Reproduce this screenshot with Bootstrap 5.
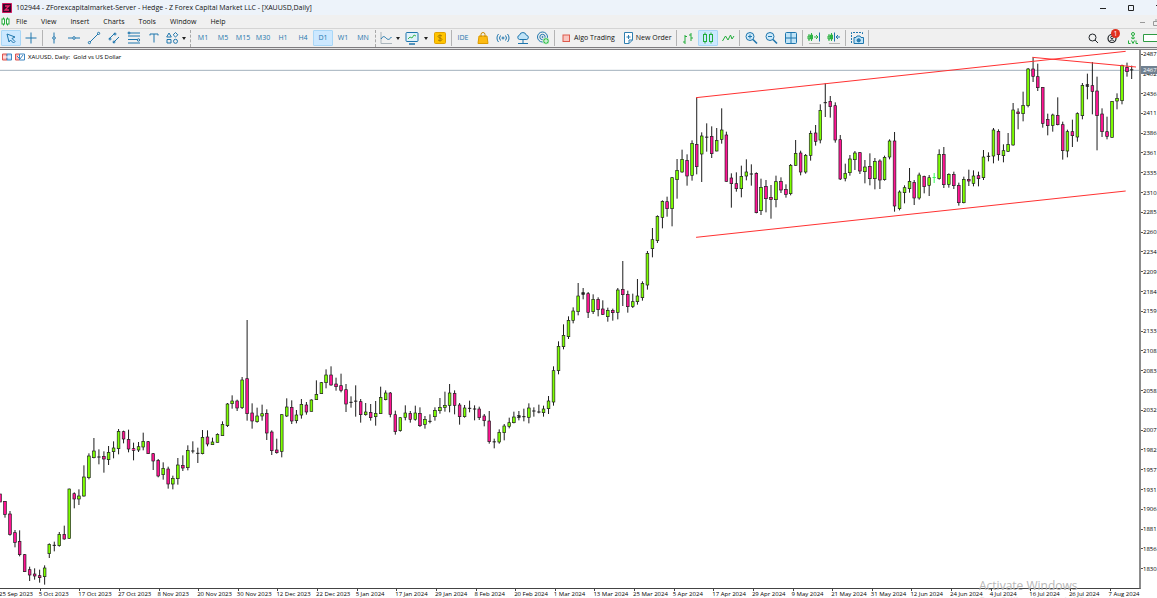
<!DOCTYPE html>
<html lang="en">
<head>
<meta charset="utf-8">
<meta name="viewport" content="width=device-width, initial-scale=1">
<title>102944 - ZForexcapitalmarket-Server</title>
<link rel="stylesheet" href="https://cdn.jsdelivr.net/npm/bootstrap@5.3.0/dist/css/bootstrap.min.css">
<style>
  body { font-family: "Open Sans", "Noto Sans", sans-serif; font-size: 7px; line-height: 12px; color: #111; background: #fff; }
  button { font: inherit; color: inherit; border: 0; background: none; padding: 0; white-space: nowrap; }
  svg { display: block; }
  .titlebar { height: 15px; background: #edf3fa; padding-left: 2px; }
  .titlebar h1 { font-size: 7px; line-height: 12px; font-weight: 400; }
  .applogo { width: 10px; height: 10px; }
  .menubar { height: 13px; background: #f0f0f0; padding-left: 1px; }
  .menubar .menus { gap: 14px; margin-left: 6px; }
  .toolbar { height: 19px; background: #f0f0f0; border-top: 1px solid #d4d4d4; padding-left: 1px; color: #1f76ad; }
  .tool { width: 20px; height: 16px; display: flex; align-items: center; justify-content: center; flex: none; border: 1px solid transparent; border-radius: 1px; }
  .tool.wide { width: 16px; }
  .tool svg, .cmd svg { width: 14px; height: 14px; fill: none; stroke: currentColor; stroke-width: 1; flex: none; }
  .tool.on { background: #cce8ff; border-color: #a9d7f7; }
  .caret { width: 8px; display: flex; justify-content: center; }
  .caret::before { content: ""; border: 2px solid transparent; border-top: 3px solid #222; border-bottom: 0; }
  .rule { width: 1px; height: 16px; background: #b4b4b4; margin: 0 1px; flex: none; }
  .grip { width: 1px; height: 17px; border-left: 1px dashed #a8a8a8; margin: 0 2px; flex: none; }
  .cmd { display: flex; align-items: center; gap: 1px; color: #111; flex: none; margin: 0 3px; }
  .green { color: #22ad3b; }
  .frame { height: 3px; border-top: 1px solid #7f7d80; border-bottom: 1px solid #7f7d80; background: #e4e4e4; }
  .plot { border-right: 2px solid #8c8c8c; border-bottom: 1px solid #444; }
  .plot svg { width: 100%; height: 100%; }
  .caption { left: 2px; top: 2px; gap: 3px; font-size: 6px; line-height: 10px; color: #000; }
  .caption svg { width: 10px; height: 8px; }
  .prices { width: 16px; padding-bottom: 16px; font-size: 6px; line-height: 8px; color: #000; }
  .prices span { display: flex; align-items: center; }
  .prices span::before { content: ""; width: 2px; height: 1px; background: #555; flex: none; }
  .lastprice { left: 0; top: 16px; width: 16px; padding-left: 2px; background: #708090; color: #fff; }
  .dates { height: 9px; font-size: 6px; line-height: 10px; color: #000; }
  .dates span { flex: 0 0 3.425%; margin-left: -1px; margin-right: 1px; white-space: nowrap; position: relative; }
  .dates span + span::before { content: ""; position: absolute; left: 1px; top: 0; width: 1px; height: 2px; background: #444; }
  .watermark { right: 20px; bottom: -17px; width: 140px; color: #b8b8b8; pointer-events: none; white-space: nowrap; }
  .watermark b { display: block; font-weight: 400; font-size: 12px; line-height: 15px; }
  .watermark small { display: block; font-size: 8px; line-height: 12px; color: #dcdcdc; }
  .alertdot { left: 7px; top: -2px; width: 9px; height: 9px; border-radius: 50%; background: #e0301e; color: #fff; line-height: 9px; text-align: center; }
</style>
</head>
<body class="d-flex flex-column vh-100 overflow-hidden">

<svg width="0" height="0" class="position-absolute" aria-hidden="true">
  <symbol id="i-cursor" viewBox="0 0 14 14"><path d="M3 3l8 3-3 1.500 3 3-1.500 1.500-3-3L5 11z"/></symbol>
  <symbol id="i-cross" viewBox="0 0 14 14"><path d="M7 1.500v11M1.500 7h11"/></symbol>
  <symbol id="i-vline" viewBox="0 0 14 14"><path d="M7 1.500v4M7 8.500v4"/><circle cx="7" cy="7" r="1.300"/></symbol>
  <symbol id="i-hline" viewBox="0 0 14 14"><path d="M1 7h4.500M8.500 7h4.500"/><circle cx="7" cy="7" r="1.300"/></symbol>
  <symbol id="i-trend" viewBox="0 0 14 14"><path d="M3 11l8-8"/><circle cx="2.400" cy="11.600" r="1.100"/><circle cx="11.600" cy="2.400" r="1.100"/></symbol>
  <symbol id="i-channel" viewBox="0 0 14 14"><path d="M2 8l6-6M6 12l6-6"/><circle cx="3" cy="8" r="1"/><circle cx="8" cy="3" r="1"/><circle cx="7" cy="11" r="1"/></symbol>
  <symbol id="i-fibo" viewBox="0 0 14 14"><path d="M1 2h12M1 5h12M1 8.500h9M1 12h12"/><circle cx="11.500" cy="9" r="1.200"/><circle cx="2" cy="2" r="1"/></symbol>
  <symbol id="i-text" viewBox="0 0 14 14"><path d="M3 4.500V3h8v1.500M7 3v8.500"/></symbol>
  <symbol id="i-shapes" viewBox="0 0 14 14"><path d="M4 2L1.700 6h4.600zM2 8.500h4V12H2z"/><path d="M10.500 1.500l2.300 2.300-2.300 2.300-2.300-2.300z"/><circle cx="10.500" cy="10.300" r="2"/></symbol>
  <symbol id="i-line" viewBox="0 0 14 14"><path d="M2 1v11.500h11" stroke="#aab4bb"/><path d="M2 8c2-3 3-3 5-1s3 2 5.500-1"/></symbol>
  <symbol id="i-monitor" viewBox="0 0 14 14"><rect x="1" y="1.500" width="12" height="9" rx="1" fill="#dff1fb"/><path d="M4 13h6" stroke-width="1.500"/><path d="M3 8l2-2 2 1 2-3 2 1" stroke="#3fb950"/></symbol>
  <symbol id="i-dollar" viewBox="0 0 14 14"><rect x="1.500" y="1.500" width="11" height="11" rx="1" fill="#ffc400" stroke="#e0a100"/><path d="M9 5C8 4 5 4 5 5.500S9 7 9 8.500 6 10 5 9M7 3.500v7" stroke="#a87c00"/></symbol>
  <symbol id="i-bag" viewBox="0 0 14 14"><path d="M3 5h8l1 7.500H2z" fill="#fdbb12" stroke="#dd9c00"/><path d="M5 6V3.500a2 2 0 014 0V6" stroke="#c98b00"/></symbol>
  <symbol id="i-signal" viewBox="0 0 14 14"><circle cx="7" cy="7" r="1"/><path d="M4.500 4.500a4 4 0 000 5M9.500 4.500a4 4 0 010 5M2.500 3a6 6 0 000 8M11.500 3a6 6 0 010 8"/></symbol>
  <symbol id="i-cloud" viewBox="0 0 14 14"><path d="M3.500 8.500a2.200 2.200 0 010-4.300 3.500 3.500 0 016.800 0 2.200 2.200 0 01.500 4.300z" fill="#bfe3f7"/><path d="M7 8.500V12M2 12.500h10"/></symbol>
  <symbol id="i-target" viewBox="0 0 14 14"><circle cx="6.500" cy="6" r="5"/><circle cx="6.500" cy="6" r="2.700"/><circle cx="6.500" cy="6" r=".6"/><circle cx="10" cy="10" r="3.200" fill="#35bf4c" stroke="#fff" stroke-width=".6"/><path d="M10 8v4M8 10h4" stroke="#fff"/></symbol>
  <symbol id="i-stop" viewBox="0 0 14 14"><rect x="4" y="4" width="6.500" height="6.500" fill="#f9c6c0" stroke="#dd5a4c"/></symbol>
  <symbol id="i-order" viewBox="0 0 14 14"><path d="M3.500 1.500h8V9L8 12.500H3.500z" fill="#fff" stroke="#2f7fb0"/><path d="M7.500 4v4M5.500 6h4M8 12.500V9h3.500" stroke="#2f7fb0"/></symbol>
  <symbol id="i-bars" viewBox="0 0 14 14"><path d="M4 4v9M2 11h2M4 5.500h2M10 2v8M8 4h2M10 7h2"/></symbol>
  <symbol id="i-candles" viewBox="0 0 14 14"><path d="M4 1.500v2M4 10.500v2M10 1.500v2M10 10.500v2"/><rect x="2.500" y="3.500" width="3" height="7"/><rect x="8.500" y="3.500" width="3" height="7"/></symbol>
  <symbol id="i-wave" viewBox="0 0 14 14"><path d="M1.500 10l3-5 2.500 4 2.500-5 1.500 4 2-3"/></symbol>
  <symbol id="i-zoomin" viewBox="0 0 14 14"><circle cx="6" cy="5.500" r="4" fill="#cfeafa"/><path d="M9 8.500l4 4" stroke-width="1.600"/><path d="M6 3.500v4M4 5.500h4"/></symbol>
  <symbol id="i-zoomout" viewBox="0 0 14 14"><circle cx="6" cy="5.500" r="4" fill="#cfeafa"/><path d="M9 8.500l4 4" stroke-width="1.600"/><path d="M4 5.500h4"/></symbol>
  <symbol id="i-tiles" viewBox="0 0 14 14"><rect x="1.500" y="1.500" width="11" height="11" rx="1" fill="#bfe3f7"/><path d="M7 1.500v11M1.500 7h11"/></symbol>
  <symbol id="i-shift" viewBox="0 0 14 14"><path d="M2 3v7M4.500 2v8M3.500 4h2v4h-2zM1 5h2v3H1zM7 6h4M9 4l2 2-2 2" stroke="#2fb344"/><path d="M12.500 1.500v9"/><path d="M2 12.500h11" stroke="#b5b5b5"/></symbol>
  <symbol id="i-scroll" viewBox="0 0 14 14"><path d="M2 3v7M4.500 2v8M3.500 4h2v4h-2zM1 5h2v3H1z" stroke="#2fb344"/><path d="M7.500 1.500v9M9 6h4M11 4L9 6l2 2"/><path d="M2 12.500h11" stroke="#b5b5b5"/></symbol>
  <symbol id="i-camera" viewBox="0 0 14 14"><path d="M1.500 12V1.500h11V4" stroke-dasharray="2 1"/><path d="M4 6.500h2l1-1.500h3l1 1.500h2.500v6H4z" fill="#bfe3f7"/><circle cx="8.700" cy="9.300" r="1.600" fill="#2f7fb0"/></symbol>
  <symbol id="i-search" viewBox="0 0 14 14"><circle cx="6.500" cy="6.500" r="3.500"/><path d="M9 9l3 3"/></symbol>
  <symbol id="i-user" viewBox="0 0 14 14"><circle cx="6" cy="7.500" r="4" stroke-width="1.200"/><circle cx="6" cy="6.500" r="1.300"/><path d="M3.500 10.500c1-2 4-2 5 0"/></symbol>
  <symbol id="i-candlemark" viewBox="0 0 9 9"><path d="M2.500 .5v8M6.500 .5v8"/><rect x="1" y="2" width="2.500" height="5" fill="#fff"/><rect x="5.500" y="2" width="2.500" height="5" fill="#fff"/></symbol>
</svg>

<header class="titlebar d-flex align-items-center gap-1">
  <svg class="applogo" viewBox="0 0 10 10"><path fill="#35062b" stroke="#d3165d" d="M.5.500h9v9h-9z"/><path fill="none" stroke="#f0226a" stroke-width="1.300" d="M3 3h4L3 7h4"/></svg>
  <h1 class="mb-0 text-nowrap">102944 - ZForexcapitalmarket-Server - Hedge - Z Forex Capital Market LLC - [XAUUSD,Daily]</h1>
  <div class="ms-auto d-flex">
    <button class="me-3" aria-label="Minimize"><svg width="12" height="12" stroke="#222"><path d="M3 6.500h6"/></svg></button>
    <button class="me-3" aria-label="Maximize"><svg width="12" height="12" stroke="#222" fill="none"><path d="M3.500 3.500h5v5h-5z"/></svg></button>
    <button aria-label="Close"><svg width="4" height="12" stroke="#222"><path d="M3 3l4 4"/></svg></button>
  </div>
</header>

<nav class="menubar d-flex align-items-center">
  <svg class="green" width="9" height="9" fill="none" stroke="currentColor"><use href="#i-candlemark"/></svg>
  <div class="menus d-flex">
    <button>File</button><button>View</button><button>Insert</button><button>Charts</button><button>Tools</button><button>Window</button><button>Help</button>
  </div>
  <div class="ms-auto d-flex gap-2">
    <button aria-label="Minimize chart"><svg width="5" height="8" stroke="#999"><path d="M0 4.500h5"/></svg></button>
    <button aria-label="Restore chart"><svg width="4" height="8" stroke="#999" fill="none"><path d="M.5 3.500h4v4h-4zM2 2h3"/></svg></button>
  </div>
</nav>

<div class="toolbar d-flex align-items-center" role="toolbar" aria-label="Chart tools">
  <button class="tool on" aria-label="Cursor"><svg><use href="#i-cursor"/></svg></button>
  <button class="tool" aria-label="Crosshair"><svg><use href="#i-cross"/></svg></button>
  <span class="rule"></span>
  <button class="tool" aria-label="Vertical line"><svg><use href="#i-vline"/></svg></button>
  <button class="tool" aria-label="Horizontal line"><svg><use href="#i-hline"/></svg></button>
  <button class="tool" aria-label="Trendline"><svg><use href="#i-trend"/></svg></button>
  <button class="tool" aria-label="Channel"><svg><use href="#i-channel"/></svg></button>
  <button class="tool" aria-label="Fibonacci"><svg><use href="#i-fibo"/></svg></button>
  <button class="tool" aria-label="Text"><svg><use href="#i-text"/></svg></button>
  <button class="tool wide" aria-label="Shapes"><svg><use href="#i-shapes"/></svg></button>
  <button class="caret" aria-label="More shapes"></button>
  <span class="grip"></span>
  <button class="tool">M1</button><button class="tool">M5</button><button class="tool">M15</button><button class="tool">M30</button><button class="tool">H1</button><button class="tool">H4</button><button class="tool on">D1</button><button class="tool">W1</button><button class="tool">MN</button>
  <span class="grip"></span>
  <button class="tool wide" aria-label="Chart type"><svg><use href="#i-line"/></svg></button>
  <button class="caret" aria-label="More chart types"></button>
  <button class="tool" aria-label="Indicators"><svg><use href="#i-monitor"/></svg></button>
  <button class="caret" aria-label="More indicators"></button>
  <button class="tool" aria-label="Trade"><svg><use href="#i-dollar"/></svg></button>
  <span class="rule"></span>
  <button class="tool">IDE</button>
  <button class="tool" aria-label="Market"><svg><use href="#i-bag"/></svg></button>
  <button class="tool" aria-label="Signals"><svg><use href="#i-signal"/></svg></button>
  <button class="tool" aria-label="VPS"><svg><use href="#i-cloud"/></svg></button>
  <button class="tool" aria-label="Copy"><svg><use href="#i-target"/></svg></button>
  <span class="rule"></span>
  <button class="cmd"><svg><use href="#i-stop"/></svg>Algo Trading</button>
  <button class="cmd"><svg><use href="#i-order"/></svg>New Order</button>
  <span class="rule"></span>
  <button class="tool green" aria-label="Bar chart"><svg><use href="#i-bars"/></svg></button>
  <button class="tool green on" aria-label="Candlesticks"><svg><use href="#i-candles"/></svg></button>
  <button class="tool green" aria-label="Line chart"><svg><use href="#i-wave"/></svg></button>
  <span class="rule"></span>
  <button class="tool" aria-label="Zoom in"><svg><use href="#i-zoomin"/></svg></button>
  <button class="tool" aria-label="Zoom out"><svg><use href="#i-zoomout"/></svg></button>
  <button class="tool" aria-label="Tile windows"><svg><use href="#i-tiles"/></svg></button>
  <span class="rule"></span>
  <button class="tool" aria-label="Shift end"><svg><use href="#i-shift"/></svg></button>
  <button class="tool" aria-label="Auto scroll"><svg><use href="#i-scroll"/></svg></button>
  <span class="rule"></span>
  <button class="tool" aria-label="Screenshot"><svg><use href="#i-camera"/></svg></button>
  <span class="rule"></span>
  <div class="ms-auto d-flex align-items-center text-dark">
    <button class="tool" aria-label="Search"><svg><use href="#i-search"/></svg></button>
    <button class="tool position-relative" aria-label="Notifications"><svg><use href="#i-user"/></svg><span class="alertdot position-absolute">1</span></button>
    <button class="tool green" aria-label="Level"><svg viewBox="0 0 14 14"><circle cx="7" cy="3" r="1.500"/><path d="M7 4.500v3M5 6.500l2 1.500 2-1.500M2.500 9.500v3h2M5.500 9.500l1.500 3 1.500-3M10 9.500v3h2"/></svg></button>
    <svg width="14" height="10" fill="#fff" stroke="#2f9c43"><path d="M15 1.500H.5v7H15"/></svg>
  </div>
</div>
<div class="frame"></div>

<main class="flex-grow-1 d-flex">
  <section class="plot flex-grow-1 position-relative">
    <svg id="chart" class="position-absolute" viewBox="0 0 3420 1614" preserveAspectRatio="none" role="img" aria-label="XAUUSD daily candlesticks"></svg>
    <div class="caption position-absolute d-flex align-items-center">
      <svg viewBox="0 0 10 8"><path fill="#fbb" stroke="#d9534f" d="M.5 1h4.500v6H.5z"/><path fill="#bdf" stroke="#3f86c0" d="M5 1h4.500v6H5z"/><path stroke="#fff" d="M1 4h8"/></svg>
      <svg viewBox="0 0 10 8"><path fill="#fbb" stroke="#d9534f" d="M.5 1h4v6h-4z"/><path fill="#fff" stroke="#3f86c0" d="M4.500 1h5v6h-5zM2 3l3 3 3-4"/></svg>
      <span>XAUUSD, Daily:&nbsp; Gold vs US Dollar</span>
    </div>
    <div class="watermark position-absolute"><b>Activate Windows</b><small>Go to Settings to activate Windows.</small></div>
  </section>
  <aside id="prices" class="prices position-relative d-flex flex-column justify-content-between"><div class="lastprice position-absolute">2467.</div></aside>
</main>
<footer id="dates" class="dates d-flex overflow-hidden position-relative"></footer>

<script src="https://cdn.jsdelivr.net/npm/bootstrap@5.3.0/dist/js/bootstrap.bundle.min.js"></script>
<script>
  // Each entry: kind (g up, m down, k flat, l live), high, body top, body bottom, low; offset is added to every level.
  const runs = [
    [1110, `m222,222,246,246 m243,244,283,293 m273,282,343,347 m330,338,367,382 m331,364,404,409 m402,404,455,456 m440,449,465,483 m445,462,468,479 m449,467,473,488 g436,444,470,494
    g370,373,401,414 k365,376,376,394 g336,343,377,380 m317,343,357,359 g206,207,355,356 m217,221,237,265 g208,228,237,255 g136,171,228,230 g100,108,173,178 g54,93,113,115
    k88,111,111,133 m94,109,117,158 g78,97,119,135 g64,84,95,115 g27,34,86,103 m32,35,57,70 m29,58,87,97 m68,86,91,121 g66,80,90,96 g38,64,81,91
    m63,65,101,102 m99,101,123,150 m117,121,168,172 g127,145,164,179 m140,147,192,206 g167,175,192,208 g114,135,176,194 m106,136,144,153 g76,91,143,151 k64,92,94,100
    k83,100,100,129 g30,52,101,103 m31,51,72,79 g53,66,74,74 g40,43,67,67 g4,13,47,47 g-51,-48,17,21`],
    [780, `g256,273,281,296 m269,273,294,303 g201,210,293,297 m30,206,311,332 m280,309,333,356 g293,318,335,338 g284,311,318,332 m298,310,369,390 m361,366,422,435 m386,420,428,431
    g313,314,424,442 g265,291,318,321 m271,292,333,342 g300,315,332,340 g267,283,315,326 m276,285,306,314 g268,270,304,304 g211,253,269,270 g216,218,251,252 g178,195,218,235
    m169,195,225,227 m203,222,230,242 m191,227,241,247 m222,239,282,306 k259,276,278,293 k226,272,275,320 m267,275,314,338 g279,306,314,317 m282,307,323,332 g273,310,320,347
    g230,262,311,311 g241,249,269,271 m246,249,313,322 m302,314,365,374 g322,323,362,365 g286,309,322,331 m303,310,328,338 g287,309,328,332 m292,310,347,351 g318,328,343,356
    k313,333,335,340 g292,301,320,332 g264,292,302,311 g245,286,292,305 g222,249,286,307 m241,250,286,313 m279,285,320,344 g285,294,320,323 k272,294,296,307 k286,296,298,331 m290,297,323,330`],
    [630, `m462,468,482,499 m453,483,545,551 k536,545,546,565 g508,517,546,551 g492,498,518,541 g473,488,499,505 g455,471,488,490 k453,467,472,481 m446,468,472,484 g430,444,472,490
    m442,451,455,470 k434,455,457,460 g437,447,458,470 g408,423,446,462 g319,332,426,437 g244,259,332,343 g193,226,260,268 g169,181,230,237 g142,153,181,190 g69,108,155,166
    k84,98,103,118 m96,101,157,174 g103,118,155,162 m112,118,149,169 m121,147,163,165 g143,151,170,185 m146,151,158,182 g84,90,157,178 m3,88,104,138 m92,103,140,158
    g101,125,139,144 g57,108,125,134 g64,70,113,122`],
    [90, `g513,520,615,629 g444,479,506,532 g406,409,482,489 g361,364,412,445 m350,365,386,410 g291,293,386,439 g237,271,299,356 g209,238,276,278 m223,241,288,317 g181,190,286,302
    m53,193,260,283 g157,168,222,306 k130,170,173,215 m139,169,221,234 g144,181,213,214 g85,150,178,191 m155,165,304,305 m280,294,311,383 m277,311,326,335 g257,289,326,352
    g238,276,288,301 k253,280,284,317 m277,280,398,400 g296,322,392,405 m300,319,356,397 m315,352,358,416 g287,305,359,382 m292,304,330,339 m313,328,343,353 g252,256,341,346
    g180,220,256,257 m212,219,276,286 g222,226,276,281`],
    [60, `g182,190,256,272 m165,189,214,227 g103,121,210,220 k40,97,99,141 m78,94,110,143 m97,107,210,218 m195,209,327,330 g281,310,325,334 g255,267,308,317 g243,249,269,300
    m246,248,303,312 g270,291,305,340 m250,289,326,346 g264,274,326,358 m268,273,330,357 g257,262,329,332 g208,213,261,268 m186,213,408,425 g361,366,416,421 g346,353,368,400
    g294,334,356,368 m330,337,384,405 g308,315,384,389 m317,319,350,370 g315,323,346,378 l309,322,323,339 g238,253,326,329 m231,253,344,354 g310,313,343,353 m305,313,347,357
    m338,346,398,407 g320,328,398,400 m299,328,333,348 g301,318,340,349`],
    [-15, `m380,392,401,424 g315,336,398,405 k322,333,335,349 g249,255,333,355 m253,259,329,347 g298,317,332,352 g264,298,319,321 g174,195,300,302 m190,201,206,253 g140,181,206,229
    g69,72,182,187 m37,72,94,111 m56,95,128,138 m126,127,235,248 m206,223,242,271 g206,210,241,260 m157,211,239,241 m230,239,317,344 g254,260,318,337 m224,260,272,306
    g202,206,276,290 g114,121,212,223 k86,119,124,163 m51,122,139,208 m95,138,212,316 m190,207,260,276 m215,260,274,283 g168,169,277,278 g145,160,168,193 g59,61,167,178 m53,67,80,95 k62,74,75,102`]
  ];
  const fill = { g: '#7cff00', m: '#ff1493', k: '#222', l: '#3f5' };
  let out = '<path d="M0 61H3420" stroke="#a3b1bd" stroke-width="3"/>';
  let i = 0;
  for (const [offset, text] of runs) {
    for (const item of text.trim().split(/\s+/)) {
      const [high, top, bottom, low] = item.slice(1).split(',').map(v => +v + offset);
      const kind = item[0], x = Math.round(14.84 * i++), ink = kind === 'l' ? '#3f5' : '#1c1c1c';
      out += `<path d="M${x} ${high}V${low}" stroke="${ink}" stroke-width="3"/>`;
      out += bottom - top < 5
        ? `<path d="M${x - 5} ${(top + bottom) / 2}h10" stroke="${ink}" stroke-width="3"/>`
        : `<rect x="${x - 4}" y="${top}" width="8" height="${bottom - top}" fill="${fill[kind]}" stroke="${ink}" stroke-width="2"/>`;
    }
  }
  out += '<path d="M2090 143L3380 4M2090 562L3380 423M3100 22L3411 51" stroke="#ff3030" stroke-width="3" fill="none"/>';
  document.getElementById('chart').innerHTML = out;

  const prices = [2487,2462,2436,2411,2386,2361,2335,2310,2285,2260,2234,2209,2184,2159,2133,2108,2083,2058,2032,2007,1982,1957,1931,1906,1881,1856,1830];
  document.getElementById('prices').insertAdjacentHTML('afterbegin', prices.map(p => `<span>${p}.</span>`).join(''));

  const dates = ['25 Sep 2023','5 Oct 2023','17 Oct 2023','27 Oct 2023','8 Nov 2023','20 Nov 2023','30 Nov 2023','12 Dec 2023','22 Dec 2023','5 Jan 2024','17 Jan 2024','29 Jan 2024','8 Feb 2024','20 Feb 2024','1 Mar 2024','13 Mar 2024','25 Mar 2024','5 Apr 2024','17 Apr 2024','29 Apr 2024','9 May 2024','21 May 2024','31 May 2024','12 Jun 2024','24 Jun 2024','4 Jul 2024','16 Jul 2024','26 Jul 2024','7 Aug 2024'];
  document.getElementById('dates').innerHTML = dates.map(d => `<span>${d}</span>`).join('');
</script>
</body>
</html>
